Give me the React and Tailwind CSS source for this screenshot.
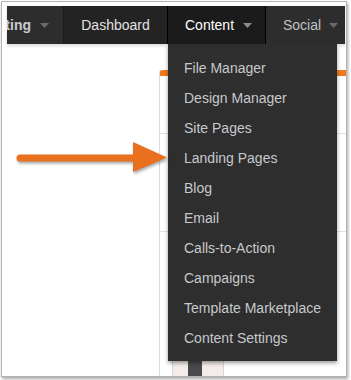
import React from 'react'

const items = [
  'File Manager',
  'Design Manager',
  'Site Pages',
  'Landing Pages',
  'Blog',
  'Email',
  'Calls-to-Action',
  'Campaigns',
  'Template Marketplace',
  'Content Settings'
]

function Caret({ color = '#777' }) {
  return (
    <svg width="9" height="5" viewBox="0 0 9 5" className="shrink-0">
      <path d="M0 0 L9 0 L4.5 5 Z" fill={color} />
    </svg>
  )
}

export default function App() {
  return (
    <div className="relative h-[380px] w-[351px] overflow-hidden bg-white font-['Liberation_Sans',Arial,sans-serif]">
      <div className="ml-[1px] mt-[1px] h-[376px] w-[346px] border border-[#b4b4b4] bg-white shadow-[1px_2px_3px_rgba(0,0,0,0.35)] overflow-hidden">
        <div className="flex flex-col pl-[5px] pt-[4px]">
          {/* Top nav */}
          <div className="flex h-[38px] w-[338px] text-[14px] shadow-[0_2px_3px_rgba(0,0,0,0.15)]">
            <div className="flex w-[56px] items-center justify-end gap-[9px] overflow-hidden bg-[#2d2d2d] pr-[14px]">
              <span className="whitespace-nowrap font-bold text-[#c9ccd0]">Marketing</span>
              <Caret color="#6b6b6b" />
            </div>
            <div className="flex w-[104px] items-center justify-center border-l border-[#1b1b1b] bg-[#232323] text-[#e2e2e2]">
              Dashboard
            </div>
            <div className="flex w-[98px] items-center gap-[9px] border-l border-black bg-[#1b1b1b] pl-[17px] text-white">
              <span>Content</span>
              <Caret color="#8a8a8a" />
            </div>
            <div className="flex flex-1 items-center gap-[8px] border-l border-black bg-[#2d2d2d] pl-[17px] text-[#bfc3c8]">
              <span>Social</span>
              <Caret color="#6b6b6b" />
            </div>
          </div>

          {/* Page body */}
          <div className="relative h-[335px]">
            <div className="ml-[152px] mt-[26px] w-[200px] rounded-tl-[4px] border-l border-t-[6px] border-l-[#dcdcdc] border-t-[#f0781e]">
              <div className="h-[58px] border-b border-[#e2e2e2]" />
              <div className="h-[98px] border-b border-[#e2e2e2]" />
              <div className="pl-[12px] pt-[121px]">
                <div className="flex h-[24px] w-[52px] justify-center border-x border-[#d8d8d8] bg-[#f3ecea]">
                  <div className="mr-[6px] h-full w-[14px] bg-[#4a4a4c]" />
                </div>
              </div>
            </div>

            {/* Dropdown */}
            <div className="absolute left-[161px] top-0 w-[169px] bg-[#2e2e2e] pb-[8px] pt-[9px] shadow-[0_2px_4px_rgba(0,0,0,0.4)]">
              {items.map((it) => (
                <div key={it} className="flex h-[30px] items-center pl-[16px] text-[14px] text-[#c6c9cd]">
                  {it}
                </div>
              ))}
            </div>
          </div>
        </div>
      </div>

      {/* Annotation arrow */}
      <svg className="absolute left-0 top-[138px]" width="172" height="40" viewBox="0 0 172 40">
        <g style={{ filter: 'drop-shadow(1px 2px 1.5px rgba(0,0,0,0.35))' }}>
          <line x1="20" y1="20" x2="136" y2="20" stroke="#e8701e" strokeWidth="7" strokeLinecap="round" />
          <path d="M133 4 L167 19.5 L133 34 Z" fill="#e8701e" />
        </g>
      </svg>
    </div>
  )
}
